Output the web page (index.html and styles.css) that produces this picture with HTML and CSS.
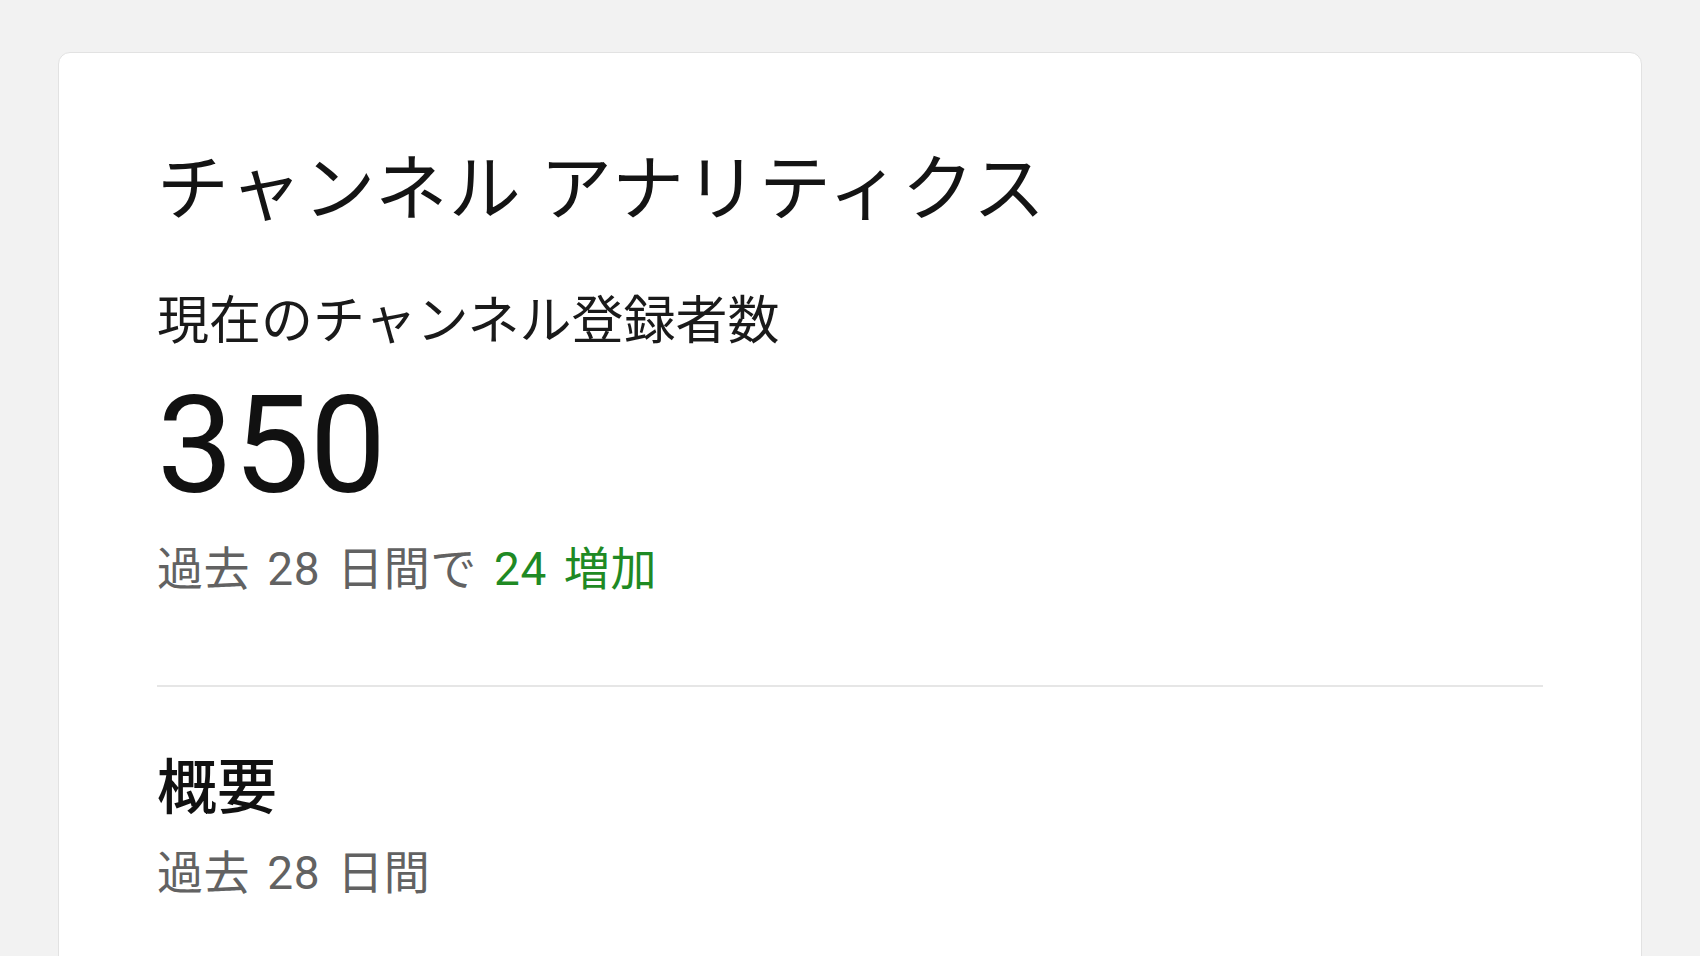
FILE: index.html
```html
<!DOCTYPE html>
<html lang="ja">
<head>
<meta charset="utf-8">
<title>チャンネル アナリティクス</title>
<link rel="stylesheet" href="styles.css">
</head>
<body>
<main class="page">
  <section class="card">
    <h1 class="card-title">チャンネル アナリティクス</h1>
    <div class="subs">
      <h2 class="subs-label">現在のチャンネル登録者数</h2>
      <div class="subs-value">350</div>
      <p class="subs-change">過去 28 日間で <span class="up">24 増加</span></p>
    </div>
    <hr class="divider">
    <div class="summary">
      <h2 class="summary-title">概要</h2>
      <p class="summary-period">過去 28 日間</p>
    </div>
  </section>
</main>
</body>
</html>
```
FILE: styles.css
```css
html, body {
  margin: 0;
  padding: 0;
  height: 100%;
  overflow: hidden;
}
body {
  background: #f2f2f2;
  font-family: "Noto Sans CJK JP", "Noto Sans", sans-serif;
  color: #111;
}
.page {
  padding: 52px 58px 0 58px;
}
.card {
  background: #fff;
  border: 1px solid #e2e2e2;
  border-radius: 12px;
  padding: 88px 98px 40px 98px;
  min-height: 1100px;
  box-sizing: border-box;
}
.card-title {
  margin: 0;
  font-size: 72px;
  line-height: 84px;
  font-weight: 400;
  color: #141414;
  letter-spacing: 1.5px;
}
.subs {
  margin-top: 60px;
}
.subs-label {
  margin: 0;
  font-size: 52px;
  line-height: 64px;
  font-weight: 400;
  color: #1a1a1a;
}
.subs-value {
  font-family: Roboto, "Noto Sans", sans-serif;
  font-size: 136px;
  line-height: 150px;
  font-weight: 400;
  color: #111;
  margin-top: 22px;
}
.subs-change {
  margin: 20px 0 0 0;
  font-family: Roboto, "Noto Sans CJK JP", sans-serif;
  font-size: 46px;
  line-height: 56px;
  word-spacing: 5px;
  letter-spacing: 0.6px;
  color: #626262;
}
.up {
  color: #1f8a24;
}
.divider {
  border: 0;
  height: 2px;
  background: #e6e6e6;
  margin: 88px 0 0 0;
}
.summary {
  margin-top: 60px;
}
.summary-title {
  margin: 0;
  font-size: 60px;
  line-height: 72px;
  font-weight: 500;
  color: #111;
}
.summary-period {
  margin: 26px 0 0 0;
  font-family: Roboto, "Noto Sans CJK JP", sans-serif;
  font-size: 46px;
  line-height: 56px;
  word-spacing: 5px;
  letter-spacing: 0.6px;
  color: #626262;
}
```
